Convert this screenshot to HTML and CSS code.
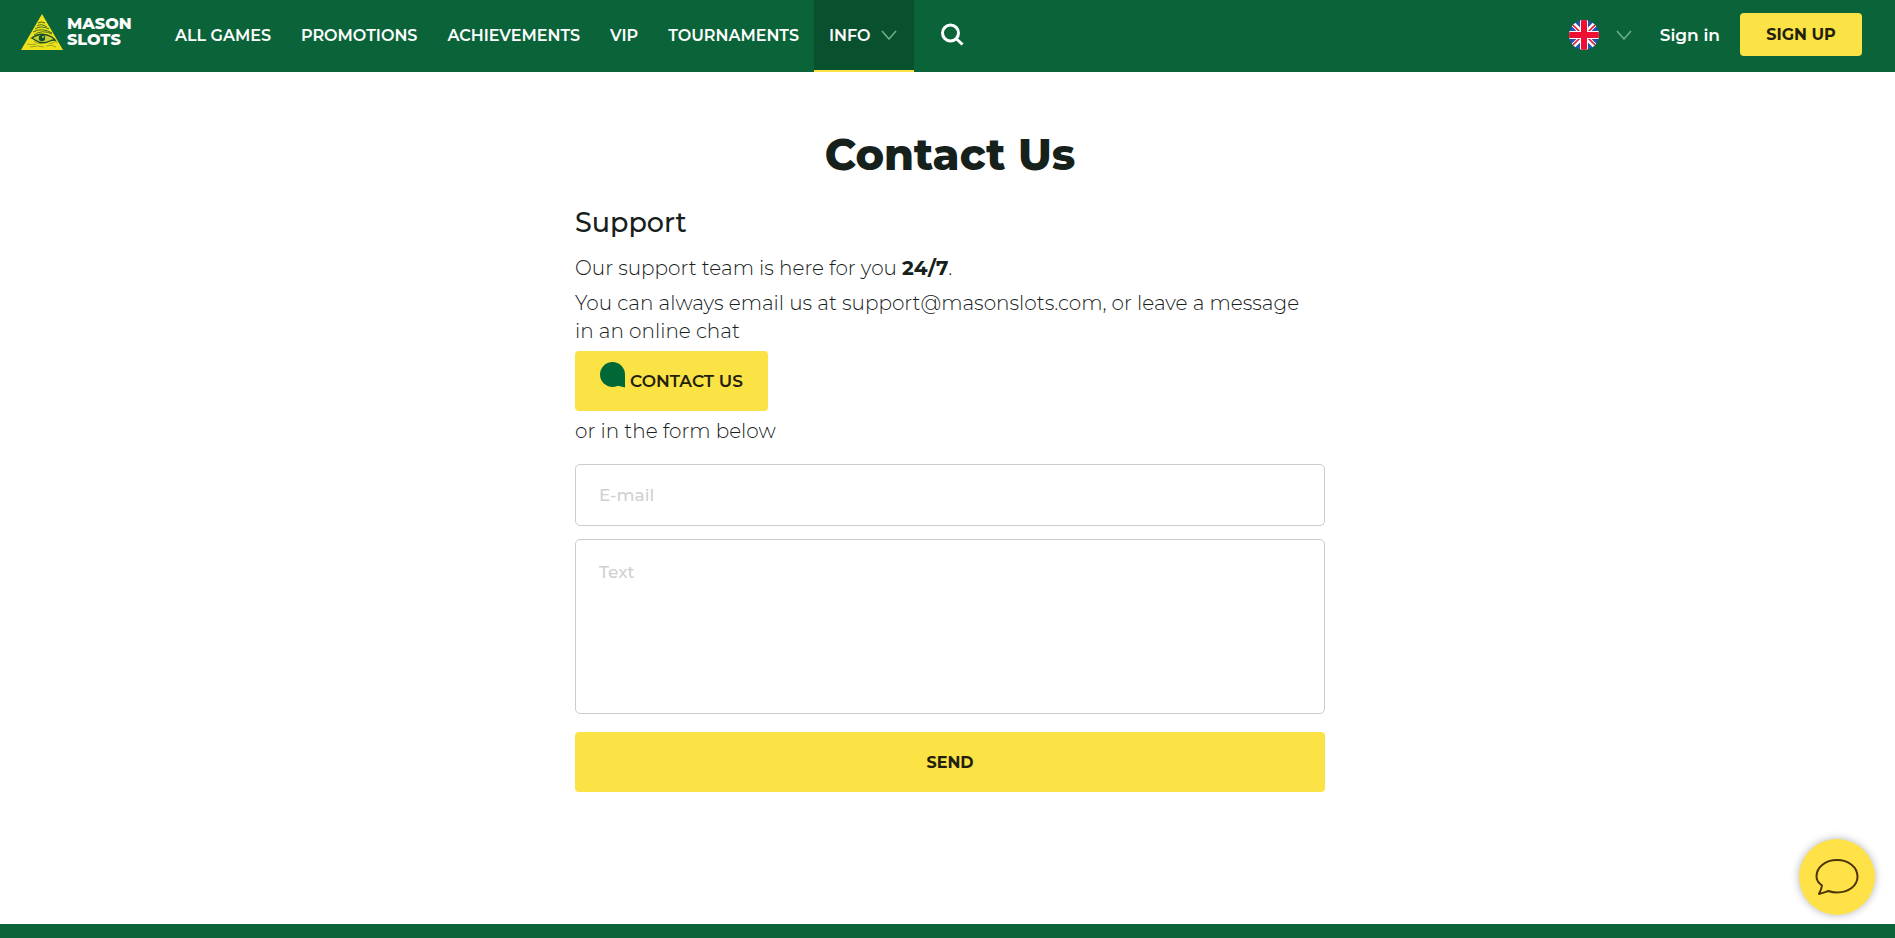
FILE: index.html
```html
<!DOCTYPE html>
<html lang="en">
<head>
<meta charset="utf-8">
<meta name="viewport" content="width=device-width, initial-scale=1">
<title>Contact Us</title>
<link rel="stylesheet" href="styles.css">
</head>
<body>
<header class="header">
  <a class="logo" href="#">
    <svg class="logo-mark" viewBox="0 0 42 37" aria-hidden="true">
      <path fill="#efe21c" d="M21 0 42 36H0z"/>
      <g fill="none" stroke="#3f6d20">
        <path d="M17 9q3-2 7 0M16 12q4-3 10 1M14 15q6-4 14 0M12 18q9-5 19 1M13 21q8-6 18-1" stroke-width="1"/>
        <path d="M9 25l4-3M6 30q4 1 9 0M9 33q8-2 14 0M25 32q5-2 10 1M33 24l3 5M28 30q5-1 7-3M13 27q3 3 8 3" stroke-width="1" opacity=".5"/>
      </g>
      <path fill="#c8cf35" stroke="#174c27" stroke-width="1.3" d="M11 24q9-7 20-1l3 3q-3 0-5 1-8 4-15-1z"/>
      <circle cx="21" cy="24" r="3.2" fill="#14522c"/>
      <circle cx="22" cy="23" r="1" fill="#c8cf35"/>
    </svg>
    <span class="logo-text"><span>MASON</span><span>SLOTS</span></span>
  </a>
  <nav class="nav">
    <a href="#">ALL GAMES</a>
    <a href="#">PROMOTIONS</a>
    <a href="#">ACHIEVEMENTS</a>
    <a href="#">VIP</a>
    <a href="#">TOURNAMENTS</a>
    <a class="active" href="#">INFO
      <svg class="chevron" viewBox="0 0 16 10" aria-hidden="true"><path d="M1 1l7 8 7-8"/></svg>
    </a>
  </nav>
  <button class="search" type="button" aria-label="Search">
    <svg viewBox="0 0 24 24" aria-hidden="true"><circle cx="10.500" cy="10" r="8"/><path d="M16 15.500 22.500 21.500"/></svg>
  </button>
  <div class="account">
    <button class="language" type="button" aria-label="Language">
      <svg class="flag" viewBox="0 0 30 30" aria-hidden="true">
        <defs><clipPath id="disc"><circle cx="15" cy="15" r="15"/></clipPath></defs>
        <g clip-path="url(#disc)">
          <path fill="#2453ae" d="M0 0h30v30H0z"/>
          <path stroke="#fff" stroke-width="5" d="M0 0 30 30M30 0 0 30"/>
          <path stroke="#e01738" stroke-width="1.6" d="M0 1 14 15M30 1 16 15M0 29 14 15M30 29 16 15"/>
          <path stroke="#fff" stroke-width="8" d="M15 0v30M0 15h30"/>
          <path stroke="#ee1034" stroke-width="6" d="M15 0v30M0 15h30"/>
        </g>
      </svg>
      <svg class="chevron" viewBox="0 0 16 10" aria-hidden="true"><path d="M1 1l7 8 7-8"/></svg>
    </button>
    <a class="sign-in" href="#">Sign in</a>
    <button class="button sign-up" type="button">SIGN UP</button>
  </div>
</header>
<main class="main">
  <div class="content">
    <h1>Contact Us</h1>
    <h2>Support</h2>
    <p>Our support team is here for you <strong>24/7</strong>.</p>
    <p>You can always email us at support@masonslots.com, or leave a message in an online chat</p>
    <button class="button contact" type="button">
      <svg viewBox="0 0 26 26" aria-hidden="true"><g fill="#006837"><circle cx="12.500" cy="12.500" r="12.500"/><path d="M25 12.500V25.500L17 23.500z"/></g></svg>
      <span>CONTACT US</span>
    </button>
    <p>or in the form below</p>
    <form class="form">
      <input type="email" placeholder="E-mail" aria-label="E-mail">
      <textarea placeholder="Text" aria-label="Text"></textarea>
      <button class="button send" type="submit">SEND</button>
    </form>
  </div>
</main>
<footer class="footer"></footer>
<button class="chat" type="button" aria-label="Open chat">
  <svg viewBox="0 0 44 38" aria-hidden="true"><path d="M22 2C33.500 2 42.500 9 42.500 18.500S33.500 34.500 22 34.500c-3.500 0-6-.5-8.500-1.500-3 1-6 2.300-9.500 3 1.500-3 2.700-5.500 3-8.500C3.500 25 1.500 22 1.500 18.500 1.500 9 10.500 2 22 2z"/></svg>
</button>
</body>
</html>
```
FILE: styles.css
```css
* {
  box-sizing: border-box;
}

body {
  display: flex;
  flex-direction: column;
  min-height: 100vh;
  margin: 0;
  background: #fff;
  color: #16211b;
  font-family: Montserrat, Inter, "Liberation Sans", sans-serif;
}

a {
  color: inherit;
  text-decoration: none;
}

button {
  padding: 0;
  border: 0;
  background: none;
  color: inherit;
  font: inherit;
  cursor: pointer;
}

svg {
  display: block;
  flex: none;
}

.header {
  display: flex;
  align-items: center;
  height: 72px;
  padding: 0 33px 0 21px;
  background: #0b6439;
  color: #fff;
}

.logo {
  display: flex;
  align-items: center;
  gap: 4px;
  width: 139px;
  padding-bottom: 8px;
}

.logo-mark {
  width: 42px;
  height: 37px;
}

.logo-text {
  display: grid;
  font-size: 16px;
  font-weight: 800;
  line-height: 16px;
}

.nav {
  display: flex;
  align-self: stretch;
  font-size: 16px;
  font-weight: 600;
}

.nav a {
  display: flex;
  align-items: center;
  gap: 10px;
  padding: 0 15px 2px;
}

.nav .active {
  padding-right: 17px;
  background: #08502e;
  box-shadow: inset 0 -2px #fbe346;
}

.chevron {
  width: 16px;
  height: 10px;
  fill: none;
  stroke: #6db28b;
  stroke-width: 1.5;
}

.search {
  margin-left: 26px;
  padding-bottom: 2px;
}

.search svg {
  width: 24px;
  height: 24px;
  fill: none;
  stroke: #fff;
  stroke-width: 3;
}

.account {
  display: flex;
  align-items: center;
  margin-left: auto;
  padding-bottom: 3px;
}

.language {
  display: flex;
  align-items: center;
  gap: 17px;
}

.flag {
  width: 30px;
  height: 30px;
}

.sign-in {
  margin: 0 20px 0 28px;
  font-size: 17px;
  font-weight: 600;
}

.button {
  border-radius: 4px;
  background: #fbe346;
  color: #231f0c;
  font-size: 16px;
  font-weight: 700;
}

.sign-up {
  width: 122px;
  height: 43px;
}

.main {
  flex: 1;
  padding: 57px 20px 119px 25px;
}

.content {
  max-width: 750px;
  margin: 0 auto;
}

h1 {
  margin: 0 0 24px;
  font-size: 43px;
  font-weight: 800;
  line-height: 52px;
  text-align: center;
}

h2 {
  margin: 0 0 13px;
  font-size: 27px;
  font-weight: 500;
  line-height: 36px;
}

p {
  margin: 0 0 7px;
  padding-right: 10px;
  font-size: 20px;
  font-weight: 300;
  line-height: 28px;
}

strong {
  font-weight: 700;
}

.contact {
  display: flex;
  align-items: center;
  gap: 4px;
  height: 60px;
  margin: -1px 0 6px;
  padding: 0 25px;
  font-size: 17px;
  font-weight: 600;
}

.contact svg {
  width: 26px;
  height: 26px;
  margin-bottom: 12px;
}

.form {
  display: flex;
  flex-direction: column;
  margin-top: 19px;
}

input,
textarea {
  display: block;
  width: 100%;
  margin: 0 0 13px;
  padding: 0 23px;
  border: 1px solid #ccc;
  border-radius: 5px;
  background: #fff;
  color: #16211b;
  font: 500 17px/24px Montserrat, Inter, "Liberation Sans", sans-serif;
}

input {
  height: 62px;
}

textarea {
  height: 175px;
  margin-bottom: 18px;
  padding-top: 20px;
  resize: none;
}

::placeholder {
  color: #d0d0d0;
  opacity: 1;
}

.send {
  height: 60px;
}

.footer {
  min-height: 14px;
  background: #0b6439;
}

.chat {
  position: fixed;
  right: 20px;
  bottom: 23px;
  display: grid;
  place-items: center;
  width: 76px;
  height: 76px;
  border-radius: 50%;
  background: #fee247;
  box-shadow: 0 0 8px rgba(0, 0, 0, .3);
}

.chat svg {
  width: 44px;
  height: 38px;
  fill: none;
  stroke: #4e3508;
  stroke-width: 2;
  stroke-linejoin: round;
}
```
